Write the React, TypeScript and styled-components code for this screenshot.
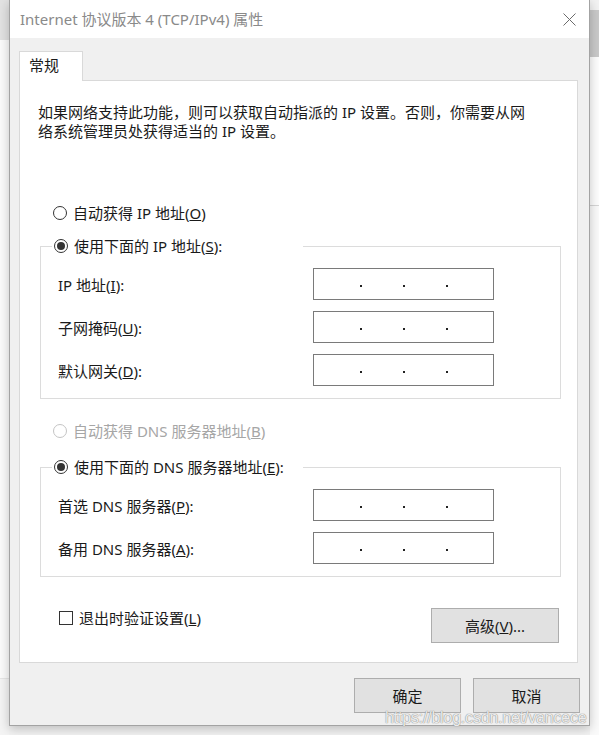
import React from "react";
import styled, { createGlobalStyle } from "styled-components";

const GlobalStyle = createGlobalStyle`
  html, body {
    margin: 0;
    padding: 0;
  }
  body {
    width: 599px;
    height: 735px;
    overflow: hidden;
    background: #f3f3f3;
    font-family: "Segoe UI", "Noto Sans", "Noto Sans CJK SC", sans-serif;
    font-size: 15px;
    color: #1a1a1a;
  }
`;

const Desktop = styled.div`
  position: relative;
  display: flex;
  width: 599px;
  height: 735px;
  overflow: hidden;
`;

const BackLeft = styled.div`
  flex: none;
  width: 9px;
  background: linear-gradient(
    #e2e2e2 0 40px,
    #fbfbfb 40px 678px,
    #e6e6e6 678px 679px,
    #f4f4f4 679px
  );
`;

const BackRight = styled.div`
  flex: 1;
  background: linear-gradient(
    #f2f2f2 0 10px,
    #c9c9c9 10px 57px,
    #fdfdfd 57px 205px,
    #d6d6d6 205px 206px,
    #fafafa 206px
  );
`;

const Window = styled.div`
  position: relative;
  z-index: 1;
  flex: none;
  width: 579px;
  height: 725px;
  border: 1px solid #a3a3a3;
  border-top: none;
  display: flex;
  flex-direction: column;
  background: #f0f0f0;
  box-shadow: 0 3px 10px rgba(0, 0, 0, 0.22);
`;

const TitleBar = styled.div`
  flex: none;
  height: 38px;
  display: flex;
  align-items: center;
  padding-left: 10px;
  background: #fff;
`;

const Title = styled.span`
  color: #8a8a8a;
  font-size: 15px;
  line-height: 20px;
  white-space: nowrap;
`;

const CloseButton = styled.div`
  margin-left: auto;
  width: 40px;
  height: 38px;
  display: flex;
  align-items: center;
  justify-content: center;
`;

const Body = styled.div`
  flex: 1;
  display: flex;
  flex-direction: column;
  padding: 13px 9px 12px 9px;
`;

const Tab = styled.div`
  position: relative;
  z-index: 1;
  width: 64px;
  height: 30px;
  box-sizing: border-box;
  margin-bottom: -1px;
  padding-left: 9px;
  border: 1px solid #d9d9d9;
  border-bottom: none;
  background: #fff;
  line-height: 27px;
`;

const Panel = styled.div`
  height: 583px;
  box-sizing: border-box;
  margin-right: 2px;
  border: 1px solid #d9d9d9;
  background: #fff;
  display: flex;
  flex-direction: column;
`;

const Intro = styled.p`
  margin: 22px 0 0 0;
  padding-left: 18px;
  line-height: 19px;
  white-space: nowrap;
`;

const OptionRow = styled.label<{ $disabled?: boolean; $top?: number }>`
  display: flex;
  align-items: center;
  gap: 6px;
  height: 20px;
  margin-top: ${(p) => p.$top ?? 0}px;
  padding-left: 33px;
  line-height: 20px;
  white-space: nowrap;
  color: ${(p) => (p.$disabled ? "#a6a6a6" : "#1a1a1a")};
`;

const RadioCircle = styled.span<{ $checked?: boolean; $disabled?: boolean }>`
  flex: none;
  width: 14px;
  height: 14px;
  box-sizing: border-box;
  border-radius: 50%;
  border: 1px solid ${(p) => (p.$disabled ? "#c4c4c4" : "#333")};
  background: #fff;
  display: flex;
  align-items: center;
  justify-content: center;
  &::after {
    content: "";
    display: ${(p) => (p.$checked ? "block" : "none")};
    width: 8px;
    height: 8px;
    border-radius: 50%;
    background: #333;
  }
`;

const Group = styled.fieldset<{ $top: number }>`
  margin: ${(p) => p.$top}px 16px 0 20px;
  padding: 12px 0 12px 11px;
  border: 1px solid #dcdcdc;
  min-width: 0;
`;

const Legend = styled.legend`
  box-sizing: border-box;
  width: 251px;
  height: 20px;
  padding: 0 0 0 2px;
  display: flex;
  align-items: center;
  gap: 6px;
  line-height: 20px;
  white-space: nowrap;
`;

const FieldGrid = styled.div`
  display: grid;
  grid-template-columns: 261px 181px;
  row-gap: 11px;
  align-items: center;
`;

const FieldLabel = styled.span`
  padding: 2px 0 0 6px;
  line-height: 20px;
  white-space: nowrap;
`;

const IpBox = styled.div`
  width: 181px;
  height: 32px;
  box-sizing: border-box;
  border: 1px solid #7a7a7a;
  background: #fff;
  display: flex;
  align-items: center;
  gap: 41px;
  padding-left: 46px;
`;

const IpDot = styled.span`
  width: 2px;
  height: 2px;
  margin-top: 4px;
  background: #222;
`;

const BottomRow = styled.div`
  display: flex;
  align-items: flex-start;
  justify-content: space-between;
  margin: 31px 18px 0 39px;
`;

const CheckRow = styled.label`
  display: flex;
  align-items: center;
  gap: 6px;
  height: 20px;
  line-height: 20px;
  white-space: nowrap;
`;

const CheckBox = styled.span`
  flex: none;
  width: 14px;
  height: 14px;
  box-sizing: border-box;
  border: 1px solid #333;
  background: #fff;
`;

const Button = styled.button<{ $width: number }>`
  width: ${(p) => p.$width}px;
  height: 35px;
  box-sizing: border-box;
  padding: 0;
  border: 1px solid #adadad;
  background: #e1e1e1;
  color: #1a1a1a;
  font-family: inherit;
  font-size: 15px;
  line-height: 20px;
`;

const Footer = styled.div`
  display: flex;
  justify-content: flex-end;
  gap: 12px;
  margin-top: 15px;
`;

const Watermark = styled.div`
  position: absolute;
  left: 385px;
  top: 709px;
  z-index: 2;
  font-family: "Liberation Sans", Arial, sans-serif;
  font-size: 16px;
  letter-spacing: -0.2px;
  color: rgba(255, 255, 255, 0.85);
  text-shadow: 0 0 1px #8a8a8a, 0 0 1px #8a8a8a;
  white-space: nowrap;
`;

const IpField = () => (
  <IpBox>
    <IpDot />
    <IpDot />
    <IpDot />
  </IpBox>
);

const App = () => {
  return (
    <>
      <GlobalStyle />
      <Desktop>
        <BackLeft />
        <Window>
          <TitleBar>
            <Title>Internet 协议版本 4 (TCP/IPv4) 属性</Title>
            <CloseButton>
              <svg width="13" height="13" viewBox="0 0 13 13">
                <path d="M0.5 0.5 L12.5 12.5 M12.5 0.5 L0.5 12.5" stroke="#6b6b6b" strokeWidth="1" fill="none" />
              </svg>
            </CloseButton>
          </TitleBar>
          <Body>
            <Tab>常规</Tab>
            <Panel>
              <Intro>
                如果网络支持此功能，则可以获取自动指派的 IP 设置。否则，你需要从网
                <br />
                络系统管理员处获得适当的 IP 设置。
              </Intro>

              <OptionRow $top={62}>
                <RadioCircle />
                <span>
                  自动获得 IP 地址(<u>O</u>)
                </span>
              </OptionRow>

              <Group $top={13}>
                <Legend>
                  <RadioCircle $checked />
                  <span>
                    使用下面的 IP 地址(<u>S</u>):
                  </span>
                </Legend>
                <FieldGrid>
                  <FieldLabel>
                    IP 地址(<u>I</u>):
                  </FieldLabel>
                  <IpField />
                  <FieldLabel>
                    子网掩码(<u>U</u>):
                  </FieldLabel>
                  <IpField />
                  <FieldLabel>
                    默认网关(<u>D</u>):
                  </FieldLabel>
                  <IpField />
                </FieldGrid>
              </Group>

              <OptionRow $top={22} $disabled>
                <RadioCircle $disabled />
                <span>
                  自动获得 DNS 服务器地址(<u>B</u>)
                </span>
              </OptionRow>

              <Group $top={16}>
                <Legend>
                  <RadioCircle $checked />
                  <span>
                    使用下面的 DNS 服务器地址(<u>E</u>):
                  </span>
                </Legend>
                <FieldGrid>
                  <FieldLabel>
                    首选 DNS 服务器(<u>P</u>):
                  </FieldLabel>
                  <IpField />
                  <FieldLabel>
                    备用 DNS 服务器(<u>A</u>):
                  </FieldLabel>
                  <IpField />
                </FieldGrid>
              </Group>

              <BottomRow>
                <CheckRow>
                  <CheckBox />
                  <span>
                    退出时验证设置(<u>L</u>)
                  </span>
                </CheckRow>
                <Button $width={128}>
                  高级(<u>V</u>)...
                </Button>
              </BottomRow>
            </Panel>
            <Footer>
              <Button $width={107}>确定</Button>
              <Button $width={107}>取消</Button>
            </Footer>
          </Body>
        </Window>
        <BackRight />
        <Watermark>https://blog.csdn.net/vancece</Watermark>
      </Desktop>
    </>
  );
};

export default App;
